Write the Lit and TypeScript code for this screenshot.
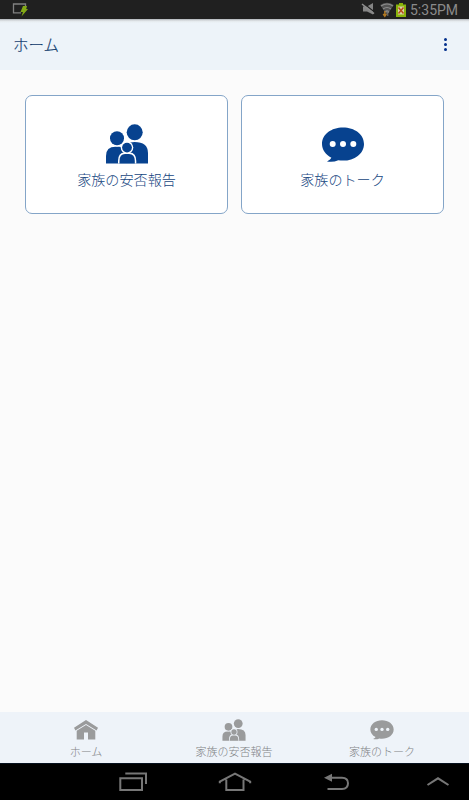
import { LitElement, html, css, svg } from "lit";
import { customElement } from "lit/decorators.js";

const family = html`<svg class="family" viewBox="0 0 42 40">
  ${svg`<path fill="currentColor" d="M0 39.5V32Q0 22.8 9.5 22.8H13Q17.5 22.8 18.5 24.5Q20 18 28.5 18Q42 18 42 29V39.5Z"/>
  <circle class="halo" cx="28.7" cy="8.3" r="9.3"/><circle fill="currentColor" cx="28.7" cy="8.3" r="8"/>
  <circle class="halo" cx="11" cy="14.2" r="8.2"/><circle fill="currentColor" cx="11" cy="14.2" r="7"/>
  <path class="halo" d="M12 39.5V37Q12 28.4 18.5 28.4H23.5Q30.3 28.4 30.3 37V39.5Z"/>
  <circle class="halo" cx="21" cy="23.6" r="6.3"/><circle fill="currentColor" cx="21" cy="23.6" r="4.9"/>
  <path fill="currentColor" d="M13.5 39.5V37Q13.5 30 19 30H23Q28.8 30 28.8 37V39.5Z"/>`}
</svg>`;

const talk = html`<svg class="talk" viewBox="0 0 42 36">
  ${svg`<path fill="currentColor" d="M21 .5C32.5.5 42 7.3 42 16.9S32.5 33.6 21 33.6Q18.5 33.6 16.3 33.2Q11 35.5 5 34.4Q8.9 32.5 9.4 30.8C3.5 27.3 0 22.6 0 16.9C0 7.3 9.5.5 21 .5Z"/>
  <circle class="halo" cx="10.7" cy="17" r="3"/><circle class="halo" cx="21" cy="17" r="3"/><circle class="halo" cx="31.3" cy="17" r="3"/>`}
</svg>`;

const house = html`<svg class="house" viewBox="0 0 24 20">
  ${svg`<path fill="currentColor" d="M12 0L24 7.8L22.6 10.6L12 3.9L1.4 10.6L0 7.8Z"/><path fill="currentColor" d="M12 5L21.3 10.8V19.5H14V12.5H10V19.5H2.7V10.8Z"/>`}
</svg>`;

@customElement("app-root")
export class AppRoot extends LitElement {
  static styles = css`
    :host {
      display: flex;
      flex-direction: column;
      height: 100vh;
      overflow: hidden;
      background: #fbfbfb;
      font-family: "Noto Sans CJK JP", sans-serif;
      font-weight: 300;
    }
    svg { display: block; flex: none; }
    .halo { fill: var(--surface); }
    .status {
      height: 19px;
      flex: none;
      display: flex;
      align-items: center;
      background: #202020;
      padding: 0 11px 0 12px;
    }
    .signals { margin-left: auto; }
    .time {
      width: 48px;
      margin-left: 3px;
      padding-top: 1px;
      font: 400 14px/18px Roboto, sans-serif;
      color: #8a8a8a;
      white-space: nowrap;
    }
    .header {
      height: 51px;
      flex: none;
      box-sizing: border-box;
      display: flex;
      align-items: center;
      justify-content: space-between;
      padding: 0 22px 0 13px;
      color: #163f70;
      background: linear-gradient(#aeb2b6, #e4e8ec 2px, #edf3f9 4px);
    }
    .title { font-size: 15.5px; line-height: 24px; padding-bottom: 2px; font-weight: 300; -webkit-text-stroke: 0.2px; }
    .main {
      flex: 1;
      display: grid;
      grid-template-columns: 203px 203px;
      grid-template-rows: 119px;
      gap: 13px;
      padding: 25px 25px 0;
    }
    .card {
      --surface: #fff;
      box-sizing: border-box;
      border: 1px solid #84a5c8;
      border-radius: 7px;
      background: #fff;
      display: flex;
      flex-direction: column;
      align-items: center;
      color: #07428f;
    }
    .art { height: 44px; margin-top: 28px; display: flex; }
    .art .family { width: 42px; height: 40px; }
    .art .talk { width: 42px; height: 36px; margin-top: 3px; }
    .label { font-size: 14.1px; line-height: 22px; color: #174681; white-space: nowrap; }
    .tabs {
      --surface: #eef3f9;
      height: 51px;
      flex: none;
      display: grid;
      grid-template-columns: repeat(3, 148px);
      padding-left: 12px;
      background: #eef3f9;
      color: #9a9b9c;
    }
    .tab { display: flex; flex-direction: column; align-items: center; }
    .glyph { height: 24px; padding-top: 7px; display: flex; }
    .glyph .house { width: 24px; height: 20px; margin-top: 1px; }
    .glyph .family { width: 24px; height: 22px; }
    .glyph .talk { width: 24px; height: 20px; margin-top: 1px; }
    .name { font-size: 11px; line-height: 16px; color: #808285; white-space: nowrap; }
    .system {
      height: 37px;
      flex: none;
      box-sizing: border-box;
      background: #000;
      border-top: 1px solid #07111e;
    }
    .system svg { width: 100%; height: 36px; }
  `;

  render() {
    return html`
      <div class="status">
        <svg width="17" height="15" viewBox="0 0 17 15">
          <path d="M9 10.8H1.5V2H13.5V4" fill="none" stroke="#808080" stroke-width="1.3" />
          <path d="M11 4H15L14.2 7H16L9.5 14.5L11 10H8.5Z" fill="#83a916" />
        </svg>
        <svg class="signals" width="46" height="18" viewBox="361 1 46 18">
          <path d="M363 6.5H367L373 3V14.5L367 11.5H363Z" fill="#858585" />
          <path d="M363 3L375 12.5" stroke="#202020" stroke-width="1.2" />
          <path d="M362 4L374 13.7" stroke="#8c8c8c" stroke-width="1.6" />
          <path d="M380.3 5Q387 .5 393.7 5L387 15Z" fill="#535353" />
          <path d="M381 6Q387 2 393 6M383 9Q387 6 391 9M385 12Q387 10 389 12" fill="none" stroke="#8c8c8c" stroke-width="1.2" />
          <path d="M384.8 11V16M383.2 14L384.8 16.3L386.4 14" stroke="#b17822" stroke-width="1.4" fill="none" />
          <path d="M387.8 16V12M386.8 13L387.8 11.5L389 13" stroke="#777" stroke-width="1" fill="none" />
          <path d="M399 3H403V4.5H406V17H396V4.5H399Z" fill="#89b30b" />
          <rect x="398" y="6.5" width="6" height="8" fill="#d7d6a5" />
          <path d="M398.5 7.5L403.5 13.5M403.5 7.5L398.5 13.5" stroke="#b84a18" stroke-width="1.5" />
        </svg>
        <span class="time">5:35PM</span>
      </div>
      <header class="header">
        <span class="title">ホーム</span>
        <svg width="3" height="13" viewBox="0 0 3 13" fill="#03308c">
          <circle cx="1.5" cy="1.5" r="1.5" /><circle cx="1.5" cy="6.5" r="1.5" /><circle cx="1.5" cy="11.5" r="1.5" />
        </svg>
      </header>
      <main class="main">
        <div class="card"><div class="art">${family}</div><span class="label">家族の安否報告</span></div>
        <div class="card"><div class="art">${talk}</div><span class="label">家族のトーク</span></div>
      </main>
      <nav class="tabs">
        <div class="tab"><div class="glyph">${house}</div><span class="name">ホーム</span></div>
        <div class="tab"><div class="glyph">${family}</div><span class="name">家族の安否報告</span></div>
        <div class="tab"><div class="glyph">${talk}</div><span class="name">家族のトーク</span></div>
      </nav>
      <div class="system">
        <svg viewBox="0 764 469 36" fill="none" stroke="#777" stroke-width="2">
          <path d="M120.3 778.3H142V790H120.3ZM125.3 773.5H146V784" />
          <path d="M219.8 783.3V781.7L235 773.7L250.2 781.7V783.3M226.3 779.5V790H243.5V779.5" />
          <path d="M331 777.7H342Q348 777.7 348 783.2T342 789H327.5" />
          <path d="M324 777.7L332 773.7V781.7Z" fill="#777" stroke="none" />
          <path d="M427.5 785L438 778.3L448.5 785" />
        </svg>
      </div>
    `;
  }
}
